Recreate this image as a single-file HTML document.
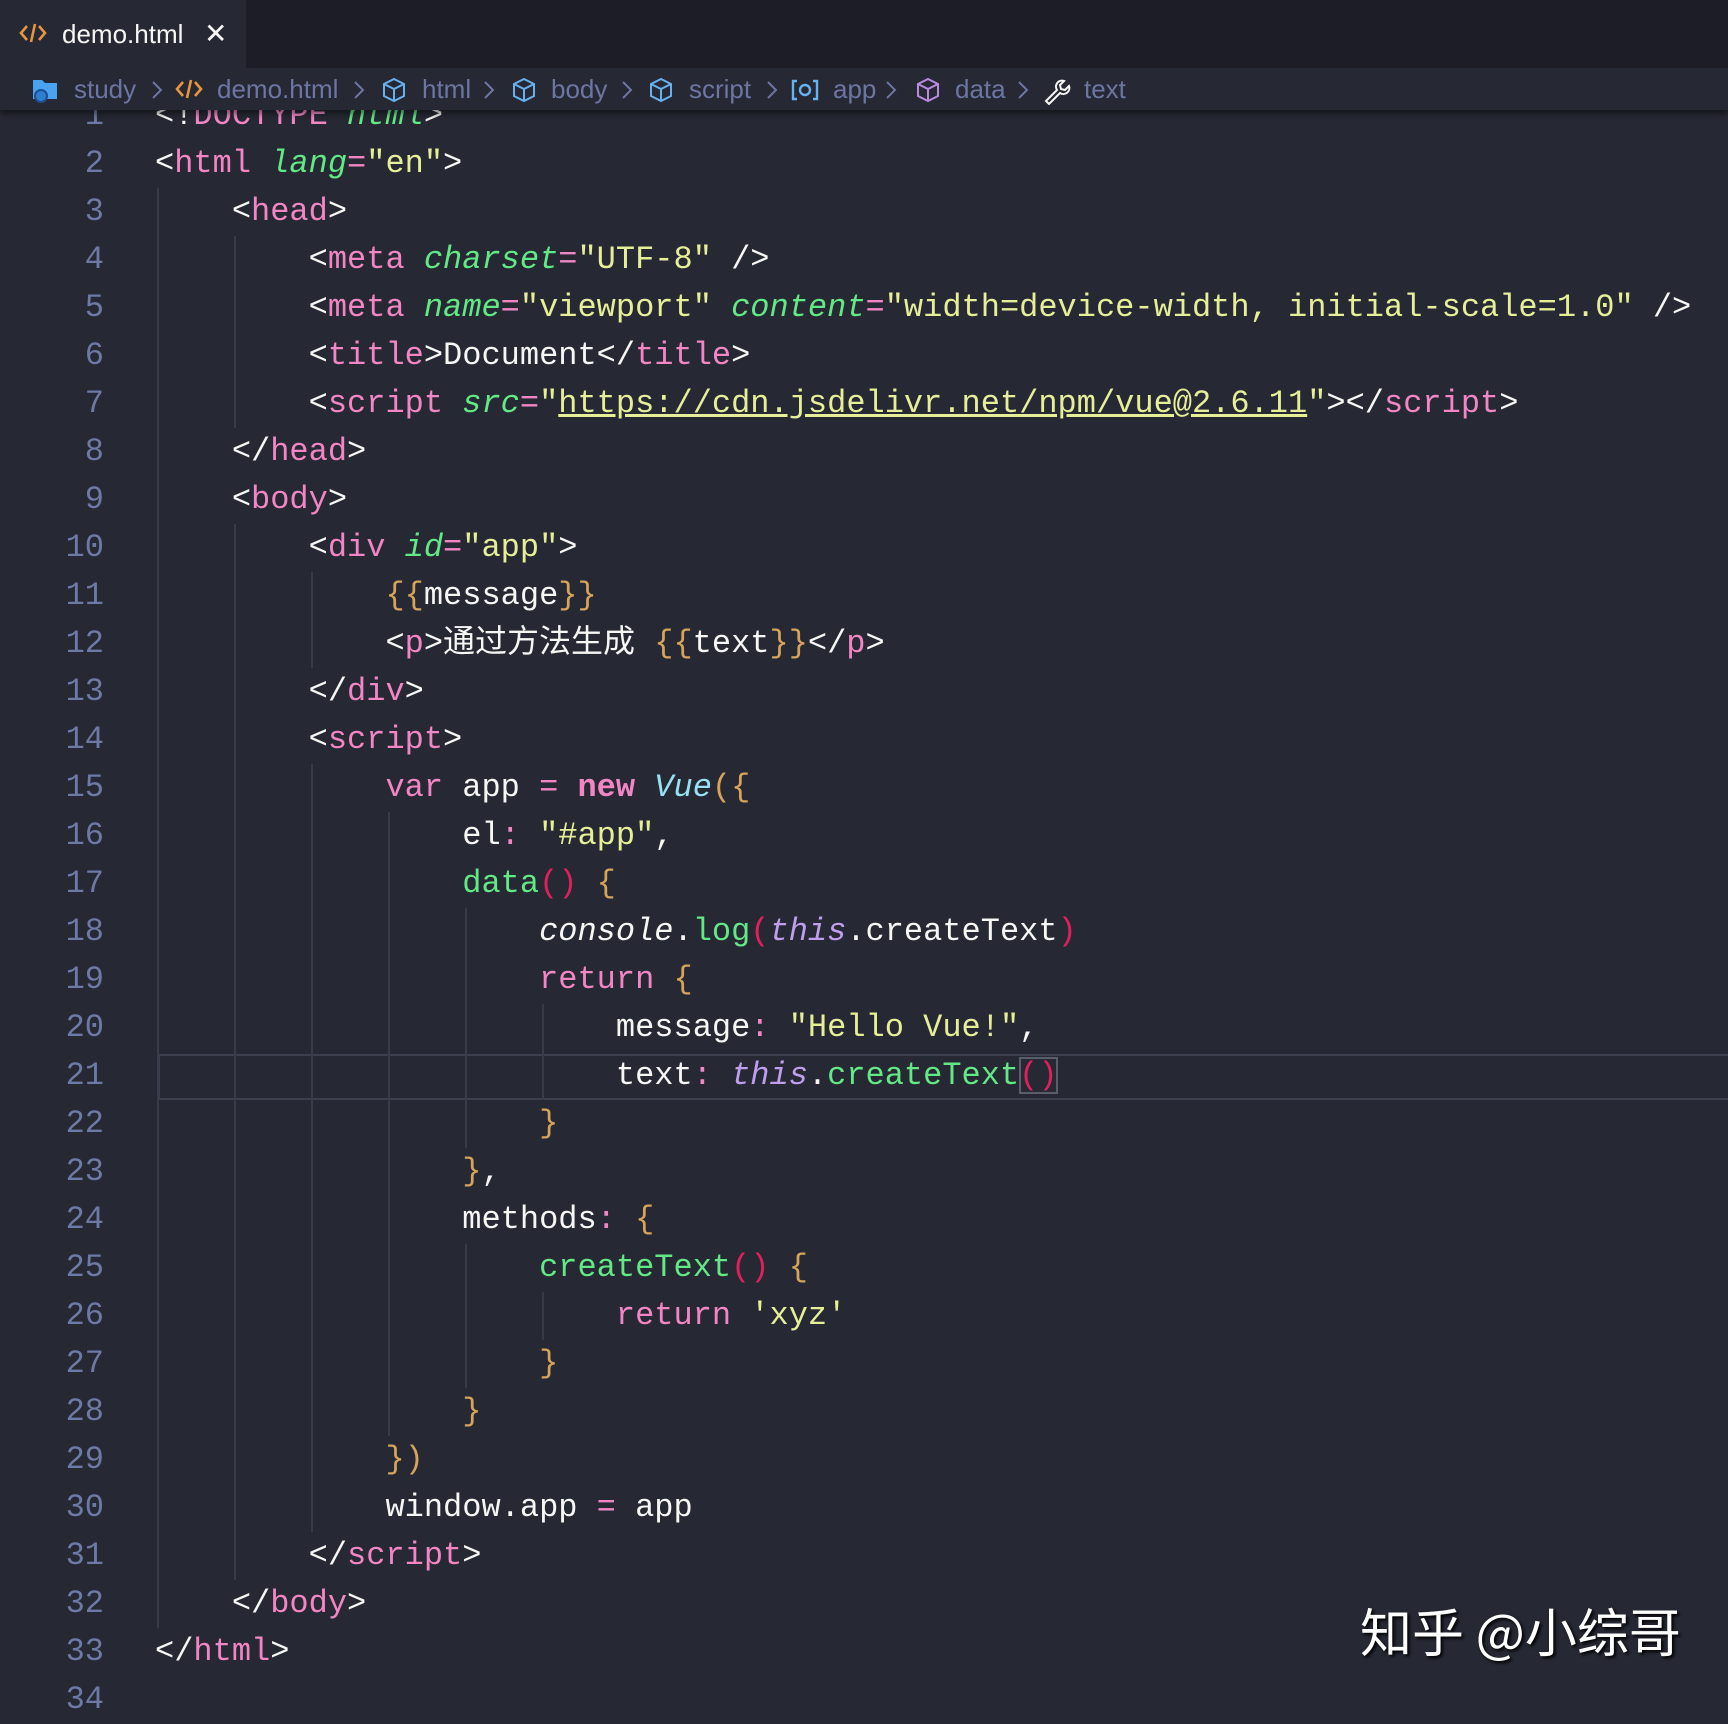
<!DOCTYPE html>
<html><head><meta charset="utf-8"><style>
*{margin:0;padding:0;box-sizing:border-box}
body{width:1728px;height:1704px;background:#262834;overflow:hidden;position:relative;font-family:"Liberation Mono","Noto Sans CJK SC",monospace}
#tabs{position:absolute;left:0;top:0;width:1728px;height:68px;background:#1c1d26;z-index:6}
#tab{position:absolute;left:0;top:0;width:246px;height:68px;background:#262834;font-family:"Liberation Sans",sans-serif;font-size:26px;color:#f6f6f4}
#bc{position:absolute;left:0;top:68px;width:1728px;height:42px;background:#262834;box-shadow:0 4px 6px rgba(0,0,0,.45);z-index:5;font-family:"Liberation Sans",sans-serif;font-size:26px;color:#6c76a3}
#bc span,#bc svg{position:absolute}
#bc span{top:6px}
#bc svg.ch{top:12px}
#code{position:absolute;left:0;top:2px;width:1728px;height:1704px}
.ln{position:absolute;left:0;width:104px;text-align:right;font-size:32px;color:#6d7aa5;height:48px;line-height:48px}
.c{position:absolute;left:155px;font-size:32px;color:#f6f6f4;height:48px;line-height:48px;white-space:pre}
.g{position:absolute;width:2px;background:#383b4a}
.t{color:#f286c4}.a{color:#62e884;font-style:italic}.s{color:#e7ee98}.y{color:#d7a25a}.r{color:#e0205e}.v{color:#97e1f1;font-style:italic}.p{color:#bf9eee;font-style:italic}.f{color:#62e884}
</style></head><body>
<div id="tabs"><div id="tab">
<svg style="position:absolute;left:19px;top:22px" width="28" height="22" viewBox="0 0 28 22"><path d="M8 4L2 11l6 7M20 4l6 7-6 7M16 2l-4 18" stroke="#e5963f" stroke-width="2.6" fill="none"/></svg>
<span style="position:absolute;left:62px;top:19px">demo.html</span>
<span style="position:absolute;left:204px;top:17px;font-size:28px">✕</span>
</div></div>
<div id="bc">
<svg style="left:31px;top:6px" width="28" height="30" viewBox="0 0 28 30"><path d="M2 6h9l3 3h12v16H2z" fill="#4aa3f0"/><circle cx="10" cy="22" r="6" fill="#2f7fd0" stroke="#1f4f90" stroke-width="2"/></svg>
<span style="left:74px">study</span>
<svg class="ch" style="left:151px" width="12" height="20" viewBox="0 0 12 20"><path d="M2 2l8 8-8 8" stroke="#6c76a3" stroke-width="2" fill="none"/></svg>
<svg style="left:175px;top:10px" width="28" height="22" viewBox="0 0 28 22"><path d="M8 4L2 11l6 7M20 4l6 7-6 7M16 2l-4 18" stroke="#e5963f" stroke-width="2.6" fill="none"/></svg>
<span style="left:217px">demo.html</span>
<svg class="ch" style="left:353px" width="12" height="20" viewBox="0 0 12 20"><path d="M2 2l8 8-8 8" stroke="#6c76a3" stroke-width="2" fill="none"/></svg>
<svg style="left:380px;top:8px" width="28" height="28" viewBox="0 0 28 28"><path d="M14 3l10 5v12l-10 5-10-5V8zM4 8l10 5 10-5M14 13v12" stroke="#67b2ee" stroke-width="2" fill="none"/></svg>
<span style="left:422px">html</span>
<svg class="ch" style="left:483px" width="12" height="20" viewBox="0 0 12 20"><path d="M2 2l8 8-8 8" stroke="#6c76a3" stroke-width="2" fill="none"/></svg>
<svg style="left:510px;top:8px" width="28" height="28" viewBox="0 0 28 28"><path d="M14 3l10 5v12l-10 5-10-5V8zM4 8l10 5 10-5M14 13v12" stroke="#67b2ee" stroke-width="2" fill="none"/></svg>
<span style="left:551px">body</span>
<svg class="ch" style="left:621px" width="12" height="20" viewBox="0 0 12 20"><path d="M2 2l8 8-8 8" stroke="#6c76a3" stroke-width="2" fill="none"/></svg>
<svg style="left:647px;top:8px" width="28" height="28" viewBox="0 0 28 28"><path d="M14 3l10 5v12l-10 5-10-5V8zM4 8l10 5 10-5M14 13v12" stroke="#67b2ee" stroke-width="2" fill="none"/></svg>
<span style="left:689px">script</span>
<svg class="ch" style="left:766px" width="12" height="20" viewBox="0 0 12 20"><path d="M2 2l8 8-8 8" stroke="#6c76a3" stroke-width="2" fill="none"/></svg>
<svg style="left:790px;top:10px" width="30" height="24" viewBox="0 0 30 24"><path d="M7 3H3v18h4M23 3h4v18h-4" stroke="#67b2ee" stroke-width="2.4" fill="none"/><circle cx="15" cy="12" r="5" stroke="#67b2ee" stroke-width="2.4" fill="none"/></svg>
<span style="left:833px">app</span>
<svg class="ch" style="left:885px" width="12" height="20" viewBox="0 0 12 20"><path d="M2 2l8 8-8 8" stroke="#6c76a3" stroke-width="2" fill="none"/></svg>
<svg style="left:914px;top:8px" width="28" height="28" viewBox="0 0 28 28"><path d="M14 3l10 5v12l-10 5-10-5V8zM4 8l10 5 10-5M14 13v12" stroke="#b98ae0" stroke-width="2" fill="none"/></svg>
<span style="left:955px">data</span>
<svg class="ch" style="left:1017px" width="12" height="20" viewBox="0 0 12 20"><path d="M2 2l8 8-8 8" stroke="#6c76a3" stroke-width="2" fill="none"/></svg>
<svg style="left:1042px;top:7px" width="30" height="30" viewBox="0 0 30 30"><path d="M4 26l11-11a6 6 0 0 1 7-9l-4 4 1 4 4 1 4-4a6 6 0 0 1-9 7L7 29z" stroke="#f6f6f4" stroke-width="2" fill="none"/></svg>
<span style="left:1084px">text</span>
</div>

<div id="code">
<div style="position:absolute;left:158px;top:1052px;width:1570px;height:46px;border:2px solid #3c3f4e;border-right:none"></div>
<div class="g" style="left:157px;top:186px;height:1440px"></div>
<div class="g" style="left:234px;top:234px;height:192px"></div>
<div class="g" style="left:234px;top:522px;height:1056px"></div>
<div class="g" style="left:311px;top:570px;height:96px"></div>
<div class="g" style="left:311px;top:762px;height:768px"></div>
<div class="g" style="left:388px;top:810px;height:624px"></div>
<div class="g" style="left:465px;top:906px;height:240px"></div>
<div class="g" style="left:465px;top:1242px;height:144px"></div>
<div class="g" style="left:542px;top:1002px;height:96px"></div>
<div class="g" style="left:542px;top:1290px;height:48px"></div>

<div class="ln" style="top:90px">1</div><div class="c" style="top:90px">&lt;!<span class="t">DOCTYPE</span> <span class="a">html</span>&gt;</div>
<div class="ln" style="top:138px">2</div><div class="c" style="top:138px">&lt;<span class="t">html</span> <span class="a">lang</span><span class="t">=</span><span class="s">"en"</span>&gt;</div>
<div class="ln" style="top:186px">3</div><div class="c" style="top:186px">    &lt;<span class="t">head</span>&gt;</div>
<div class="ln" style="top:234px">4</div><div class="c" style="top:234px">        &lt;<span class="t">meta</span> <span class="a">charset</span><span class="t">=</span><span class="s">"UTF-8"</span> /&gt;</div>
<div class="ln" style="top:282px">5</div><div class="c" style="top:282px">        &lt;<span class="t">meta</span> <span class="a">name</span><span class="t">=</span><span class="s">"viewport"</span> <span class="a">content</span><span class="t">=</span><span class="s">"width=device-width, initial-scale=1.0"</span> /&gt;</div>
<div class="ln" style="top:330px">6</div><div class="c" style="top:330px">        &lt;<span class="t">title</span>&gt;Document&lt;/<span class="t">title</span>&gt;</div>
<div class="ln" style="top:378px">7</div><div class="c" style="top:378px">        &lt;<span class="t">script</span> <span class="a">src</span><span class="t">=</span><span class="s">"<u>https://cdn.jsdelivr.net/npm/vue@2.6.11</u>"</span>&gt;&lt;/<span class="t">script</span>&gt;</div>
<div class="ln" style="top:426px">8</div><div class="c" style="top:426px">    &lt;/<span class="t">head</span>&gt;</div>
<div class="ln" style="top:474px">9</div><div class="c" style="top:474px">    &lt;<span class="t">body</span>&gt;</div>
<div class="ln" style="top:522px">10</div><div class="c" style="top:522px">        &lt;<span class="t">div</span> <span class="a">id</span><span class="t">=</span><span class="s">"app"</span>&gt;</div>
<div class="ln" style="top:570px">11</div><div class="c" style="top:570px">            <span class="y">{{</span>message<span class="y">}}</span></div>
<div class="ln" style="top:618px">12</div><div class="c" style="top:618px">            &lt;<span class="t">p</span>&gt;通过方法生成 <span class="y">{{</span>text<span class="y">}}</span>&lt;/<span class="t">p</span>&gt;</div>
<div class="ln" style="top:666px">13</div><div class="c" style="top:666px">        &lt;/<span class="t">div</span>&gt;</div>
<div class="ln" style="top:714px">14</div><div class="c" style="top:714px">        &lt;<span class="t">script</span>&gt;</div>
<div class="ln" style="top:762px">15</div><div class="c" style="top:762px">            <span class="t">var</span> app <span class="t">=</span> <span class="t" style="font-weight:bold">new</span> <span class="v">Vue</span><span class="y">(</span><span class="y">{</span></div>
<div class="ln" style="top:810px">16</div><div class="c" style="top:810px">                el<span class="t">:</span> <span class="s">"#app"</span>,</div>
<div class="ln" style="top:858px">17</div><div class="c" style="top:858px">                <span class="f">data</span><span class="r">()</span> <span class="y">{</span></div>
<div class="ln" style="top:906px">18</div><div class="c" style="top:906px">                    <i>console</i>.<span class="f">log</span><span class="r">(</span><span class="p">this</span>.createText<span class="r">)</span></div>
<div class="ln" style="top:954px">19</div><div class="c" style="top:954px">                    <span class="t">return</span> <span class="y">{</span></div>
<div class="ln" style="top:1002px">20</div><div class="c" style="top:1002px">                        message<span class="t">:</span> <span class="s">"Hello Vue!"</span>,</div>
<div class="ln" style="top:1050px">21</div><div class="c" style="top:1050px">                        text<span class="t">:</span> <span class="p">this</span>.<span class="f">createText</span><span class="r" style="outline:2px solid #5a5e6a;outline-offset:-2px">()</span></div>
<div class="ln" style="top:1098px">22</div><div class="c" style="top:1098px">                    <span class="y">}</span></div>
<div class="ln" style="top:1146px">23</div><div class="c" style="top:1146px">                <span class="y">}</span>,</div>
<div class="ln" style="top:1194px">24</div><div class="c" style="top:1194px">                methods<span class="t">:</span> <span class="y">{</span></div>
<div class="ln" style="top:1242px">25</div><div class="c" style="top:1242px">                    <span class="f">createText</span><span class="r">()</span> <span class="y">{</span></div>
<div class="ln" style="top:1290px">26</div><div class="c" style="top:1290px">                        <span class="t">return</span> <span class="s">'xyz'</span></div>
<div class="ln" style="top:1338px">27</div><div class="c" style="top:1338px">                    <span class="y">}</span></div>
<div class="ln" style="top:1386px">28</div><div class="c" style="top:1386px">                <span class="y">}</span></div>
<div class="ln" style="top:1434px">29</div><div class="c" style="top:1434px">            <span class="y">}</span><span class="y">)</span></div>
<div class="ln" style="top:1482px">30</div><div class="c" style="top:1482px">            window.app <span class="t">=</span> app</div>
<div class="ln" style="top:1530px">31</div><div class="c" style="top:1530px">        &lt;/<span class="t">script</span>&gt;</div>
<div class="ln" style="top:1578px">32</div><div class="c" style="top:1578px">    &lt;/<span class="t">body</span>&gt;</div>
<div class="ln" style="top:1626px">33</div><div class="c" style="top:1626px">&lt;/<span class="t">html</span>&gt;</div>
<div class="ln" style="top:1674px">34</div>
</div>

<div style="position:absolute;left:1360px;top:1598px;font-family:'Noto Sans CJK SC',sans-serif;font-size:52px;line-height:64px;color:#fff;text-shadow:2px 2px 3px #000;white-space:nowrap">知乎 @小综哥</div>
</body></html>
